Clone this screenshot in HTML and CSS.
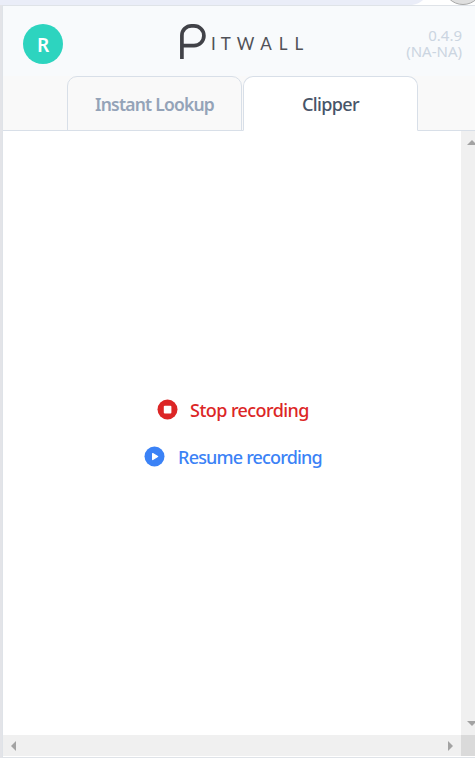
FILE: index.html
```html
<!DOCTYPE html>
<html lang="en">
<head>
<meta charset="utf-8">
<title>Pitwall</title>
<link rel="stylesheet" href="styles.css">
</head>
<body>
<div class="backdrop">
  <svg class="backdrop-top" width="475" height="5" viewBox="0 0 475 5">
    <path d="M412 5Q419 4 423 0H475V5Z" fill="#fff"/>
    <circle cx="463" cy="-15" r="19.5" fill="#dfdfdf" stroke="#a8a8a8"/>
  </svg>
</div>
<main class="popup">
  <header class="header">
    <div class="avatar">R</div>
    <svg class="logo" width="130" height="38" viewBox="0 0 130 38" role="img" aria-label="Pitwall">
      <path d="M4.9 37V13.5A9.6 9.6 0 0 1 14.5 3.8H17A9.9 9.9 0 0 1 17 23.6H4.9" fill="none" stroke="#414248" stroke-width="3.7"/>
      <text class="logo-text" y="28" x="34 43.8 59.8 83.3 101.8 117.6">ITWALL</text>
    </svg>
    <div class="version"><div>0.4.9</div><div>(NA-NA)</div></div>
  </header>
  <nav class="tabs">
    <div class="tab"><span class="lookup">Instant Lookup</span></div>
    <div class="tab active"><span class="clipper">Clipper</span></div>
  </nav>
  <section class="body">
    <div class="content">
      <div class="action stop">
        <svg width="21" height="21" viewBox="0 0 21 21"><circle cx="10.5" cy="10.5" r="10" fill="currentColor"/><rect x="6.8" y="6.8" width="7.6" height="7.6" rx="1" fill="#fff"/></svg>
        <span>Stop recording</span>
      </div>
      <div class="action resume">
        <svg width="21" height="21" viewBox="0 0 21 21"><circle cx="10.5" cy="10.5" r="10" fill="currentColor"/><path d="M8.7 7.6L13.6 10.5L8.7 13.5Z" fill="#fff" stroke="#fff" stroke-width="1.4" stroke-linejoin="round"/></svg>
        <span>Resume recording</span>
      </div>
    </div>
    <div class="scroll-y">
      <svg width="10" height="5" viewBox="0 0 10 5"><path d="M0 5L5 0L10 5Z"/></svg>
      <svg width="10" height="5" viewBox="0 0 10 5"><path d="M0 0H10L5 5Z"/></svg>
    </div>
    <div class="scroll-x">
      <svg width="5" height="10" viewBox="0 0 5 10"><path d="M5 0V10L0 5Z"/></svg>
      <svg width="5" height="10" viewBox="0 0 5 10"><path d="M0 0L5 5L0 10Z"/></svg>
    </div>
    <div class="corner"></div>
  </section>
</main>
</body>
</html>
```
FILE: styles.css
```css
* { box-sizing: border-box; }
body {
  margin: 0;
  width: 475px;
  height: 758px;
  overflow: hidden;
  background: #e3e4e8;
  font-family: "Noto Sans", "Open Sans", sans-serif;
}
.backdrop { height: 5px; background: #eaedf8; }
.backdrop-top { display: block; }
.popup {
  height: 753px;
  margin-left: 2px;
  border: solid #dfe3e8;
  border-width: 1px 0 1px 1px;
  background: #fff;
}
.header {
  height: 70px;
  padding: 18px 13px 0 20px;
  display: flex;
  background: #f8fafc;
}
.avatar {
  width: 40px;
  height: 40px;
  border-radius: 50%;
  background: #2dd4bf;
  color: #fff;
  font-size: 19px;
  font-weight: 600;
  line-height: 42px;
  text-align: center;
}
.logo { margin: -2px 0 0 114px; }
.logo-text {
  font-family: Lato, sans-serif;
  font-weight: 400;
  font-size: 17px;
  fill: #505157;
}
.version {
  margin-left: auto;
  margin-top: 3px;
  color: #cbd5e1;
  font-family: "Noto Sans", sans-serif;
  font-size: 15px;
  line-height: 16px;
  text-align: right;
  white-space: nowrap;
}
.tabs {
  height: 55px;
  padding-left: 64px;
  display: flex;
  gap: 1px;
  background: #f9f9f9;
  box-shadow: inset 0 -1px #d8dfe8;
}
.tab {
  width: 175px;
  height: 55px;
  border: 1px solid #d8dfe8;
  border-radius: 10px 10px 0 0;
  color: #94a3b8;
  font-size: 17.5px;
  font-weight: 600;
  line-height: 54px;
  text-align: center;
  white-space: nowrap;
}
.active { background: #fff; border-bottom-color: #fff; color: #475569; font-weight: 500; }
.lookup { letter-spacing: -0.78px; }
.clipper { font-size: 18px; letter-spacing: -0.6px; }
.body {
  height: 625px;
  display: grid;
  grid-template: 604px 21px / 458px 14px;
}
.content {
  display: flex;
  flex-direction: column;
  align-items: center;
  padding: 264px 0 0 2px;
  gap: 19px;
}
.action {
  height: 28px;
  display: flex;
  align-items: center;
  gap: 12px;
  font-size: 18px;
  font-weight: 500;
  line-height: 28px;
  white-space: nowrap;
}
.action span { padding-top: 2px; }
.stop { color: #dc2626; letter-spacing: -0.57px; }
.resume { gap: 13px; color: #3b82f6; letter-spacing: -0.82px; }
.scroll-y, .scroll-x {
  display: flex;
  justify-content: space-between;
  background: #f0f0f0;
  fill: #a3a3a3;
  overflow: hidden;
}
.scroll-y { flex-direction: column; padding: 9px 0 9px 6px; }
.scroll-x { align-items: center; padding: 0 8px; }
.scroll-y svg, .scroll-x svg { flex: none; }
.corner { background: #dadada; }
```
